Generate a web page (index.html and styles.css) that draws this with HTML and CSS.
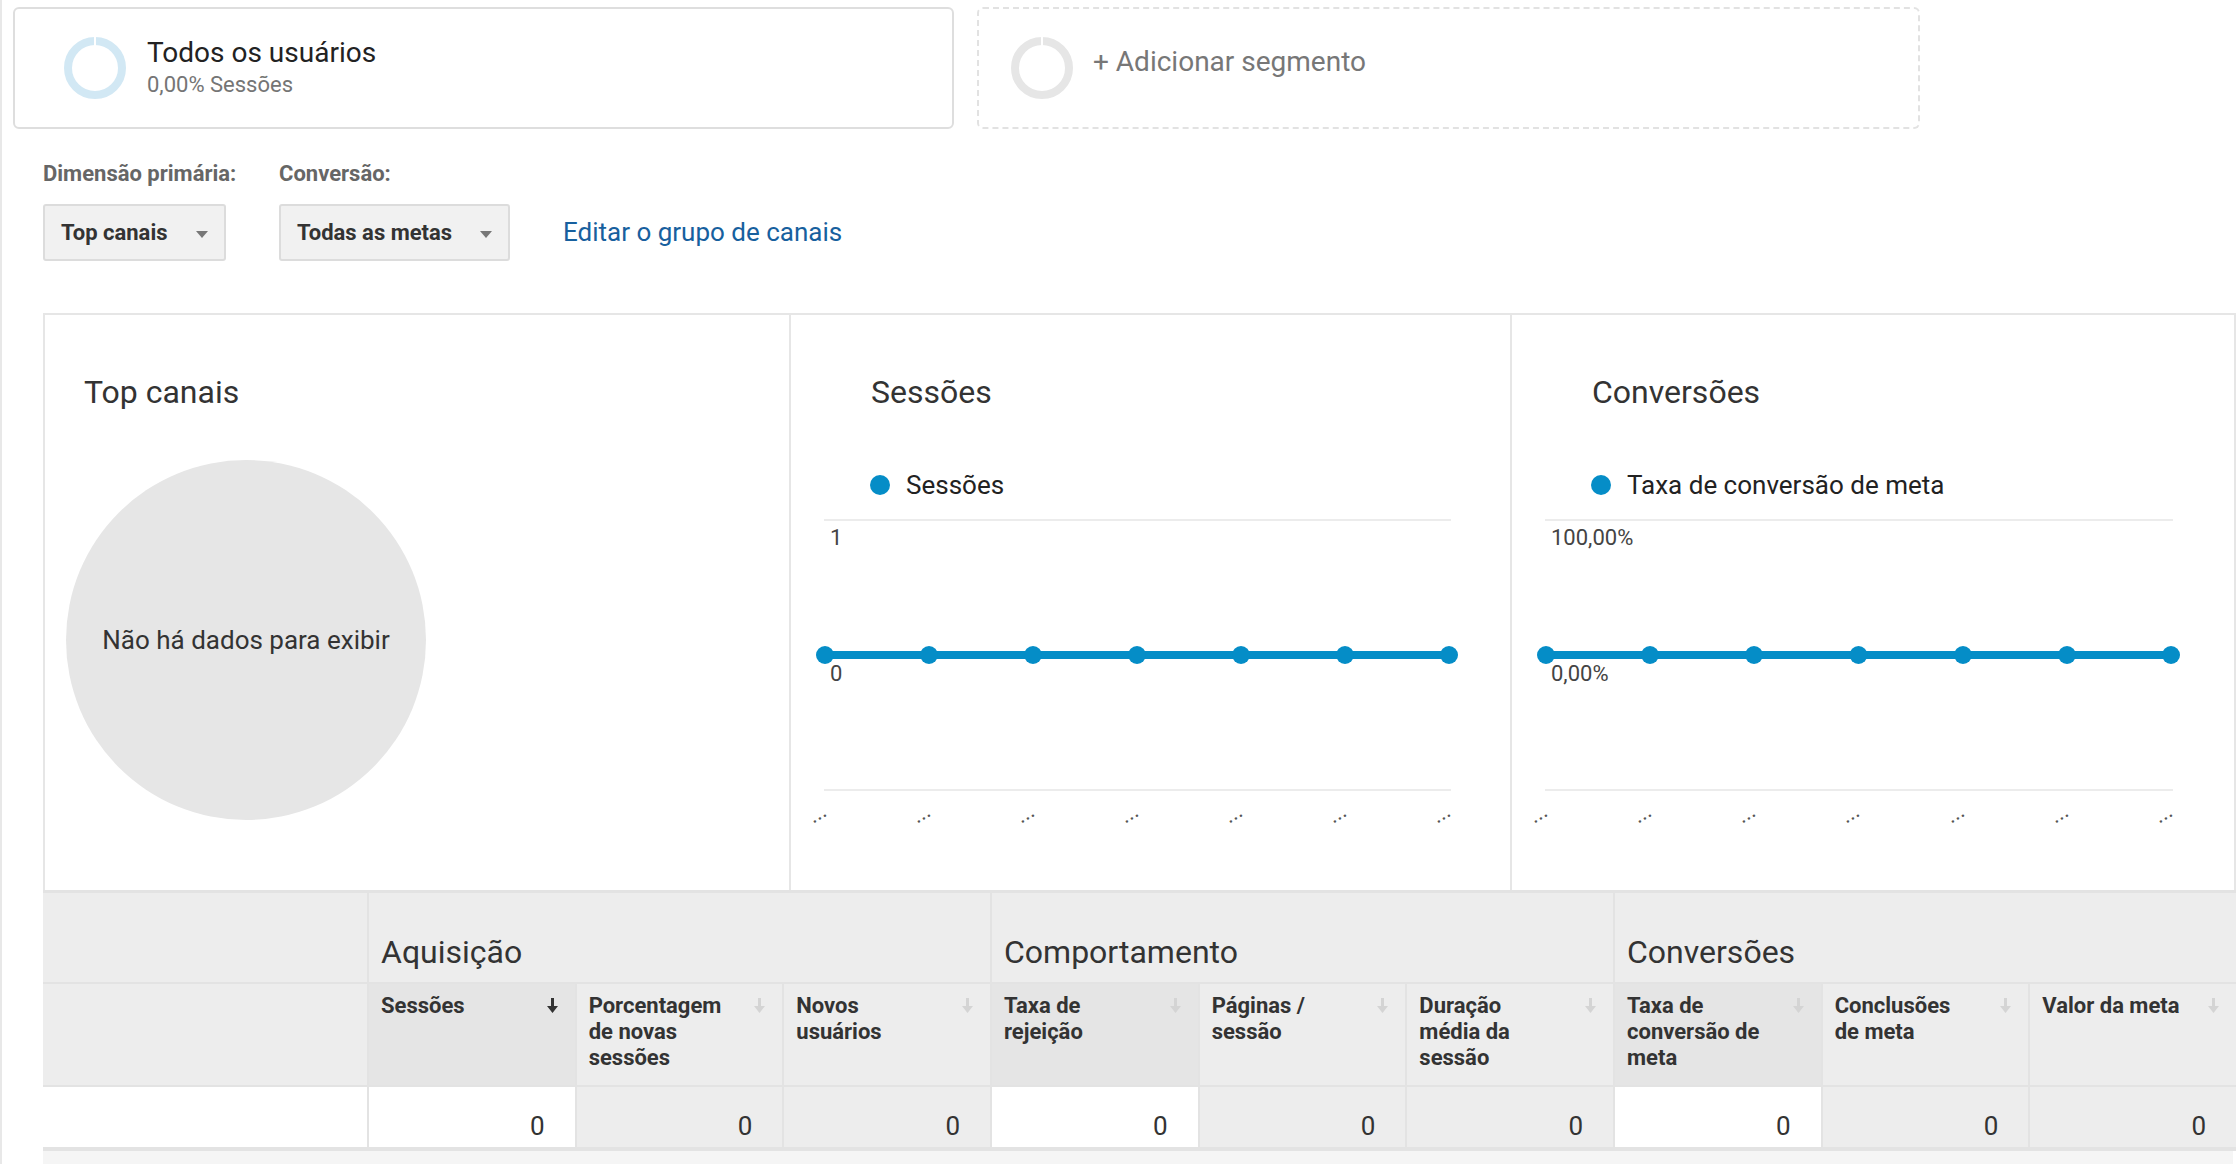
FILE: index.html
```html
<!DOCTYPE html>
<html lang="pt-BR">
<head>
<meta charset="utf-8">
<title>Top canais</title>
<link rel="stylesheet" href="styles.css">
</head>
<body>
<div class="page">
  <div class="segments">
    <div class="seg seg-active">
      <svg class="donut" width="62" height="62" viewBox="0 0 62 62"><circle cx="31" cy="31" r="27" fill="none" stroke="#d2e8f4" stroke-width="8"/><rect x="30" y="0" width="2" height="9" fill="#fff"/></svg>
      <div class="seg-text">
        <div class="seg-name">Todos os usuários</div>
        <div class="seg-sub">0,00% Sessões</div>
      </div>
    </div>
    <div class="seg seg-add">
      <svg class="donut" width="62" height="62" viewBox="0 0 62 62"><circle cx="31" cy="31" r="27" fill="none" stroke="#e6e6e6" stroke-width="8"/><rect x="30" y="0" width="2" height="9" fill="#fff"/></svg>
      <div class="seg-add-label">+ Adicionar segmento</div>
    </div>
  </div>

  <div class="controls">
    <div class="ctl ctl-primary">
      <div class="ctl-label">Dimensão primária:</div>
      <div class="dropdown"><span>Top canais</span><span class="caret"></span></div>
    </div>
    <div class="ctl ctl-conv">
      <div class="ctl-label">Conversão:</div>
      <div class="dropdown"><span>Todas as metas</span><span class="caret"></span></div>
    </div>
    <a class="edit-link">Editar o grupo de canais</a>
  </div>

  <div class="report">
    <div class="charts">
      <div class="cell">
        <div class="panel-title title-pie">Top canais</div>
        <div class="pie">Não há dados para exibir</div>
      </div>
      <div class="cell">
        <div class="panel-title title-chart">Sessões</div>
        <div class="legend"><span class="dot"></span><span>Sessões</span></div>
        <svg class="chart" width="628" height="330" viewBox="0 0 628 330">
          <line x1="0" y1="9" x2="627" y2="9" class="grid"/>
          <line x1="0" y1="279" x2="627" y2="279" class="grid"/>
          <text x="6" y="34" class="axis">1</text>
          <text x="6" y="170" class="axis">0</text>
          <line x1="1" y1="144" x2="625" y2="144" class="series"/>
          <g class="pts">
            <circle cx="1" cy="144" r="9"/><circle cx="105" cy="144" r="9"/><circle cx="209" cy="144" r="9"/><circle cx="313" cy="144" r="9"/><circle cx="417" cy="144" r="9"/><circle cx="521" cy="144" r="9"/><circle cx="625" cy="144" r="9"/>
          </g>
          <g class="xl">
            <text transform="translate(4 304) rotate(-30)">...</text>
            <text transform="translate(108 304) rotate(-30)">...</text>
            <text transform="translate(212 304) rotate(-30)">...</text>
            <text transform="translate(316 304) rotate(-30)">...</text>
            <text transform="translate(420 304) rotate(-30)">...</text>
            <text transform="translate(524 304) rotate(-30)">...</text>
            <text transform="translate(628 304) rotate(-30)">...</text>
          </g>
        </svg>
      </div>
      <div class="cell">
        <div class="panel-title title-chart">Conversões</div>
        <div class="legend"><span class="dot"></span><span>Taxa de conversão de meta</span></div>
        <svg class="chart" width="628" height="330" viewBox="0 0 628 330">
          <line x1="0" y1="9" x2="628" y2="9" class="grid"/>
          <line x1="0" y1="279" x2="628" y2="279" class="grid"/>
          <text x="6" y="34" class="axis">100,00%</text>
          <text x="6" y="170" class="axis">0,00%</text>
          <line x1="1" y1="144" x2="626" y2="144" class="series"/>
          <g class="pts">
            <circle cx="1" cy="144" r="9"/><circle cx="105" cy="144" r="9"/><circle cx="209" cy="144" r="9"/><circle cx="313.5" cy="144" r="9"/><circle cx="418" cy="144" r="9"/><circle cx="522" cy="144" r="9"/><circle cx="626" cy="144" r="9"/>
          </g>
          <g class="xl">
            <text transform="translate(4 304) rotate(-30)">...</text>
            <text transform="translate(108 304) rotate(-30)">...</text>
            <text transform="translate(212 304) rotate(-30)">...</text>
            <text transform="translate(316 304) rotate(-30)">...</text>
            <text transform="translate(421 304) rotate(-30)">...</text>
            <text transform="translate(525 304) rotate(-30)">...</text>
            <text transform="translate(629 304) rotate(-30)">...</text>
          </g>
        </svg>
      </div>
    </div>

    <div class="table">
      <div class="g g-empty"></div>
      <div class="g g-span">Aquisição</div>
      <div class="g g-span">Comportamento</div>
      <div class="g g-span">Conversões</div>

      <div class="h h-empty"></div>
      <div class="h h-sorted"><span class="hname">Sessões</span><svg class="arr arr-on" width="11" height="15" viewBox="0 0 11 15"><path d="M4 0h3v8h4l-5.5 7L0 8h4z"/></svg></div>
      <div class="h"><span class="hname">Porcentagem de novas sessões</span><svg class="arr" width="11" height="15" viewBox="0 0 11 15"><path d="M4 0h3v8h4l-5.5 7L0 8h4z"/></svg></div>
      <div class="h"><span class="hname">Novos usuários</span><svg class="arr" width="11" height="15" viewBox="0 0 11 15"><path d="M4 0h3v8h4l-5.5 7L0 8h4z"/></svg></div>
      <div class="h h-sorted"><span class="hname">Taxa de rejeição</span><svg class="arr" width="11" height="15" viewBox="0 0 11 15"><path d="M4 0h3v8h4l-5.5 7L0 8h4z"/></svg></div>
      <div class="h"><span class="hname">Páginas / sessão</span><svg class="arr" width="11" height="15" viewBox="0 0 11 15"><path d="M4 0h3v8h4l-5.5 7L0 8h4z"/></svg></div>
      <div class="h"><span class="hname">Duração média da sessão</span><svg class="arr" width="11" height="15" viewBox="0 0 11 15"><path d="M4 0h3v8h4l-5.5 7L0 8h4z"/></svg></div>
      <div class="h h-sorted"><span class="hname">Taxa de conversão de meta</span><svg class="arr" width="11" height="15" viewBox="0 0 11 15"><path d="M4 0h3v8h4l-5.5 7L0 8h4z"/></svg></div>
      <div class="h"><span class="hname">Conclusões de meta</span><svg class="arr" width="11" height="15" viewBox="0 0 11 15"><path d="M4 0h3v8h4l-5.5 7L0 8h4z"/></svg></div>
      <div class="h"><span class="hname">Valor da meta</span><svg class="arr" width="11" height="15" viewBox="0 0 11 15"><path d="M4 0h3v8h4l-5.5 7L0 8h4z"/></svg></div>

      <div class="d d-white"></div>
      <div class="d d-white">0</div>
      <div class="d">0</div>
      <div class="d">0</div>
      <div class="d d-white">0</div>
      <div class="d">0</div>
      <div class="d">0</div>
      <div class="d d-white">0</div>
      <div class="d">0</div>
      <div class="d">0</div>
    </div>
    <div class="tfoot"></div>
  </div>
</div>
</body>
</html>
```

FILE: styles.css
```css
* { box-sizing: border-box; }
html, body { margin: 0; padding: 0; background: #fff; }
body {
  width: 2240px;
  font-family: Roboto, "Noto Sans", "Liberation Sans", Arial, sans-serif;
  color: #333;
}
.page {
  border-left: 2px solid #e8e8e8;
  min-height: 1164px;
  padding-top: 7px;
}

/* segments */
.segments { display: flex; gap: 23px; margin-left: 11px; }
.seg {
  height: 122px;
  border-radius: 6px;
  display: flex;
  align-items: center;
}
.seg-active { width: 941px; border: 2px solid #dedede; padding-left: 49px; }
.seg-add { width: 943px; border: 2px dashed #e2e2e2; padding-left: 32px; }
.donut { flex: none; display: block; }
.seg-text { margin-left: 21px; margin-top: 2px; }
.seg-name { font-size: 28px; line-height: 32px; color: #222; }
.seg-sub { font-size: 22px; line-height: 32px; color: #757575; }
.seg-add-label {
  margin-left: 20px;
  margin-bottom: 12px;
  font-size: 28px;
  line-height: 32px;
  color: #777;
}

/* controls */
.controls { display: flex; align-items: flex-end; margin: 33px 0 0 41px; }
.ctl { display: flex; flex-direction: column; align-items: flex-start; flex: none; }
.ctl-primary { width: 236px; }
.ctl-conv { width: 284px; }
.ctl-label {
  font-size: 22px;
  line-height: 24px;
  font-weight: 700;
  color: #666;
  margin-bottom: 18px;
  white-space: nowrap;
}
.dropdown {
  height: 57px;
  border: 2px solid #dcdcdc;
  border-radius: 3px;
  background: #f1f1f1;
  display: flex;
  align-items: center;
  gap: 28px;
  padding: 0 16px;
  font-size: 22px;
  font-weight: 700;
  color: #333;
  white-space: nowrap;
}
.caret {
  width: 0; height: 0;
  border-left: 6.5px solid transparent;
  border-right: 6.5px solid transparent;
  border-top: 7px solid #777;
  margin-top: 4px;
}
.edit-link {
  font-size: 26px;
  line-height: 57px;
  color: #17609e;
  white-space: nowrap;
}

/* report */
.report { margin: 52px 4px 0 41px; }
.charts {
  display: grid;
  grid-template-columns: 744px 719px 1fr;
  column-gap: 2px;
  background: #e6e6e6;
  border: 2px solid #e6e6e6;
  border-bottom: none;
  height: 577px;
}
.cell { background: #fff; min-width: 0; }
.panel-title { font-size: 32px; line-height: 40px; color: #333; margin-top: 57px; }
.title-pie { padding-left: 39px; }
.title-chart { padding-left: 80px; }
.pie {
  width: 360px; height: 360px;
  border-radius: 50%;
  background: #e6e6e6;
  margin: 48px 0 0 21px;
  display: flex; align-items: center; justify-content: center;
  font-size: 26px;
  color: #333;
}
.legend {
  display: flex; align-items: center; gap: 16px;
  margin-top: 56px;
  padding-left: 79px;
  font-size: 26px;
  line-height: 34px;
  color: #222;
}
.dot { width: 20px; height: 20px; border-radius: 50%; background: #058dc7; flex: none; }
.chart { display: block; margin: 9px 0 0 33px; overflow: visible; }
.chart .grid { stroke: #ececec; stroke-width: 2; }
.chart .axis { font-family: Roboto, sans-serif; font-size: 22px; fill: #444; }
.chart .series { stroke: #058dc7; stroke-width: 8; }
.chart .pts circle { fill: #058dc7; }
.chart .xl text { font-family: Roboto, sans-serif; font-size: 22px; fill: #555; text-anchor: end; }

/* table */
.table {
  display: grid;
  grid-template-columns: 324px repeat(9, 1fr);
  gap: 2px;
  background: #e3e3e3;
  padding: 3px 0 4px;
}
.g {
  height: 89px;
  background: #ededed;
  display: flex;
  align-items: flex-end;
  padding: 0 0 10px 12px;
  font-size: 32px;
  line-height: 40px;
  color: #333;
}
.g-span { grid-column: span 3; }
.h {
  height: 101px;
  background: #ededed;
  display: flex;
  align-items: flex-start;
  padding: 9px 17px 0 12px;
  font-size: 22px;
  line-height: 26px;
  font-weight: 700;
  color: #333;
}
.h-sorted { background: #e5e5e5; }
.hname { flex: 0 1 141px; }
.arr { flex: none; margin-left: auto; margin-top: 5px; fill: #d4d4d4; }
.arr-on { fill: #333; }
.d {
  height: 60px;
  background: #ededed;
  display: flex;
  justify-content: flex-end;
  align-items: flex-end;
  padding: 0 30px 6px 0;
  font-size: 26px;
  line-height: 30px;
  color: #333;
}
.d-white { background: #fff; }
.tfoot { height: 20px; margin-right: 3px; background: #f5f5f5; }
```
